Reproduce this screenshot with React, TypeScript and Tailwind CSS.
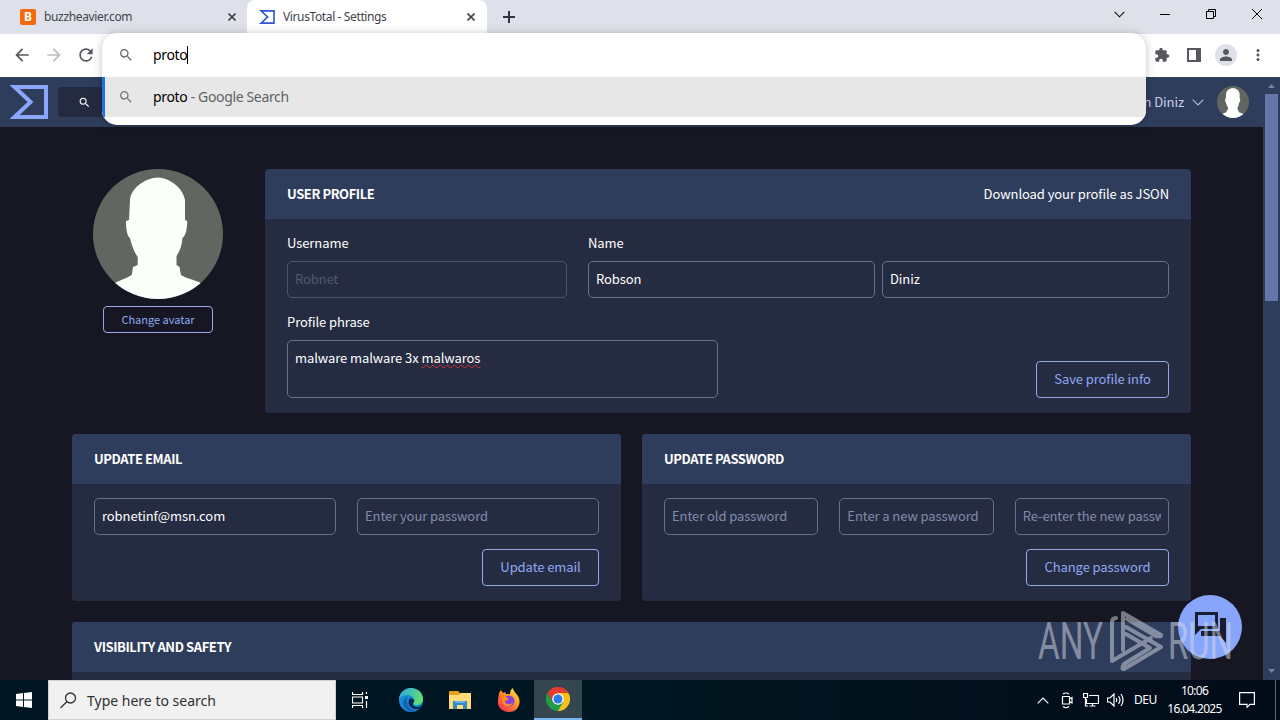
import React from "react";
import {
  MdArrowBack,
  MdArrowForward,
  MdExtension,
  MdMoreVert,
  MdPerson,
  MdRefresh,
  MdSearch,
} from "react-icons/md";
import classNames from "clsx";

type IconProps = {
  className?: string;
};

type CardProps = {
  title: string;
  action?: string;
  className?: string;
  children?: React.ReactNode;
};

type FieldProps = {
  value?: string;
  placeholder?: string;
  disabled?: boolean;
  className?: string;
};

const Avatar: React.FC<IconProps> = ({ className }) => (
  <svg viewBox="0 0 130 130" className={classNames("rounded-full", className)}>
    <rect width="130" height="130" fill="#626661" />
    <path
      fill="#fdfffc"
      d="M65 8.500C52 9 38 19 37 31L36 51L33 52C33 60 34 67 37 69C39 78 42 84 44.700 88V96L40 98L38.700 106C34 109 27 111 18 116V130H112V116C103 111 92 109 88 106L86.500 98L83.500 96V87C87 82 89 76 89.500 69C93 66 94 60 94.300 52L92 51L92 31C90 19 77 9 65 8.500Z"
    />
  </svg>
);

const VirusTotalLogo: React.FC<IconProps> = ({ className }) => (
  <svg viewBox="0 0 38 34" className={className}>
    <path
      d="M4.500 2H36V32H4.500L20.500 17Z"
      fill="none"
      stroke="currentColor"
      strokeWidth="4"
    />
  </svg>
);

const Cross: React.FC<IconProps> = ({ className }) => (
  <svg viewBox="0 0 8 8" className={className}>
    <path d="M.5 .5L7.500 7.500M7.500 .5L.5 7.500" stroke="currentColor" strokeWidth="1.600" />
  </svg>
);

const Chevron: React.FC<IconProps> = ({ className }) => (
  <svg viewBox="0 0 12 7" className={className}>
    <path d="M.7 .7L6 6L11.300 .7" fill="none" stroke="currentColor" strokeWidth="1.100" />
  </svg>
);

const TabStrip: React.FC = () => (
  <div className="flex h-[34px] bg-[#dee1e9] text-[12px] text-[#40444c]">
    <div className="flex w-[247px] items-center pl-5">
      <div className="flex h-4 w-4 items-center justify-center rounded-[2px] bg-[#f76a0b] text-[12px] font-bold text-white">
        B
      </div>
      <span className="ml-2 w-[184px] tracking-[-0.35px]">buzzheavier.com</span>
      <Cross className="h-2 w-2" />
    </div>
    <div className="flex w-[240px] items-center rounded-t-lg bg-white pl-3">
      <VirusTotalLogo className="h-[14px] w-4 text-[#3057d5]" />
      <span className="ml-2 w-[184px] tracking-[-0.38px]">VirusTotal - Settings</span>
      <Cross className="h-2 w-2" />
    </div>
    <svg viewBox="0 0 12 12" className="ml-4 mt-[11px] h-3 w-3 text-[#303440]">
      <path d="M6 0V12M0 6H12" stroke="currentColor" strokeWidth="2" />
    </svg>
    <div className="ml-auto flex items-start pr-[18px] pt-[9px] text-black">
      <Chevron className="mr-[35px] mt-0.5 h-[7px] w-[11px]" />
      <svg viewBox="0 0 10 10" className="mr-[36px] h-[10px] w-[10px]">
        <path d="M0 5.500H10" stroke="currentColor" />
      </svg>
      <svg viewBox="0 0 10 10" className="mr-9 h-[10px] w-[10px]" fill="none" stroke="currentColor">
        <path d="M.5 2.500H7.500V9.500H.5ZM2.500 2.500V.5H9.500V7.500H7.500" />
      </svg>
      <svg viewBox="0 0 10 10" className="h-[10px] w-[10px]" stroke="currentColor">
        <path d="M0 0L10 10M10 0L0 10" />
      </svg>
    </div>
  </div>
);

const Toolbar: React.FC = () => (
  <div className="flex h-[43px] items-center bg-white pb-px text-[#55585e]">
    <MdArrowBack className="ml-3 h-5 w-5" />
    <MdArrowForward className="ml-3 h-5 w-5 text-[#bbbcbf]" />
    <MdRefresh className="ml-3 h-5 w-5" />
    <MdExtension className="ml-auto h-4 w-4" />
    <svg viewBox="0 0 14 14" className="ml-[17px] h-[14px] w-[14px]">
      <path fill="currentColor" fillRule="evenodd" d="M0 0H14V14H0ZM2 2V12H9V2Z" />
    </svg>
    <div className="ml-[14px] flex h-[22px] w-[22px] items-center justify-center rounded-full bg-[#dfe1e9]">
      <MdPerson className="h-[18px] w-[18px]" />
    </div>
    <MdMoreVert className="ml-3 mr-[13px] h-[18px] w-[18px]" />
  </div>
);

const Omnibox: React.FC = () => (
  <div className="absolute left-[102px] top-[33px] z-10 flex h-[92px] w-[1044px] flex-col overflow-hidden rounded-[15px] bg-white text-[14px] shadow-[0_1px_8px_rgba(0,0,0,0.25)]">
    <div className="flex h-11 items-center pb-px pl-4">
      <MdSearch className="h-4 w-4 text-[#686b70]" />
      <span className="ml-[19px] tracking-[-0.35px] text-black">proto</span>
      <span className="h-[18px] w-px bg-black" />
    </div>
    <div className="flex h-10 items-center border-l-[3px] border-[#1a73e8] bg-[#e7e7e7] pb-px pl-[13px]">
      <MdSearch className="h-4 w-4 text-[#77797d]" />
      <span className="ml-[19px] tracking-[-0.35px] text-black">proto</span>
      <span className="whitespace-pre tracking-[-0.35px] text-[#606266]"> - Google Search</span>
    </div>
  </div>
);

const Card: React.FC<CardProps> = ({ title, action, className, children }) => (
  <section className={classNames("overflow-hidden rounded bg-[#252c42]", className)}>
    <header className="flex h-[50px] items-center justify-between bg-[#2f3d5c] px-[22px]">
      <h2 className="text-[13px] font-bold tracking-[-0.42px]">{title}</h2>
      {action && <span>{action}</span>}
    </header>
    {children}
  </section>
);

const Field: React.FC<FieldProps> = ({ value, placeholder, disabled, className }) => (
  <input
    readOnly
    value={value || ""}
    placeholder={placeholder}
    disabled={disabled}
    className={classNames(
      "h-[37px] min-w-0 rounded-[5px] border px-[7px] pb-0.5 tracking-[-0.08px] placeholder:text-[#828ba9]",
      disabled ? "border-[#4d556b] text-[#4e5a72]" : "border-[#66708f] text-white",
      className
    )}
  />
);

const Button: React.FC<{ label: string; className: string }> = ({ label, className }) => (
  <button
    className={classNames(
      "whitespace-nowrap rounded border border-[#95a9e5] text-center text-[#8ea8f4]",
      className
    )}
  >
    {label}
  </button>
);

const SettingsPage: React.FC = () => (
  <div className="flex h-[603px] bg-[#171723] font-['Noto_Sans_CJK_SC',sans-serif] text-[13px] tracking-[-0.08px] text-white">
    <main className="w-[1263px] overflow-hidden">
      <nav className="flex h-[50px] items-center bg-[#2f3d5c] pl-[10px] pr-[14px]">
        <VirusTotalLogo className="h-[34px] w-[38px] text-[#8ba6fb]" />
        <div className="ml-[10px] flex h-[30px] w-[300px] items-center rounded bg-[#242b40] pl-5">
          <MdSearch className="h-[13px] w-[13px]" />
        </div>
        <span className="ml-auto text-[#c6d0ea]">Robson Diniz</span>
        <Chevron className="ml-2 mr-[13px] h-[7px] w-3 text-[#b4c0df]" />
        <Avatar className="h-8 w-8" />
      </nav>
      <div className="ml-[72px] mt-[42px] w-[1119px]">
        <div className="flex">
          <div className="flex w-[193px] flex-col items-center pr-[21px]">
            <Avatar className="h-[130px] w-[130px]" />
            <Button label="Change avatar" className="mt-[7px] h-[27px] w-[110px] text-[11px] tracking-normal" />
          </div>
          <Card title="USER PROFILE" action="Download your profile as JSON" className="h-[244px] w-[926px]">
            <div className="flex gap-[21px] px-[22px] pt-[15px]">
              <label className="flex w-[280px] flex-col">
                <span className="mb-[9px] h-[18px] leading-[18px]">Username</span>
                <Field value="Robnet" disabled />
              </label>
              <div className="flex-1">
                <div className="mb-[9px] h-[18px] leading-[18px]">Name</div>
                <div className="flex gap-[7px]">
                  <Field value="Robson" className="flex-1" />
                  <Field value="Diniz" className="flex-1" />
                </div>
              </div>
            </div>
            <div className="flex items-end justify-between px-[22px] pt-[15px]">
              <div>
                <div className="mb-[9px] h-[18px] leading-[18px]">Profile phrase</div>
                <div className="h-[58px] w-[431px] rounded-[5px] border border-[#66708f] px-[7px] pt-[7px] leading-[19px]">
                  malware malware 3x{" "}
                  <span className="underline decoration-[#d32f43] decoration-wavy decoration-1 underline-offset-1">
                    malwaros
                  </span>
                </div>
              </div>
              <Button label="Save profile info" className="h-[37px] w-[133px] pb-0.5" />
            </div>
          </Card>
        </div>
        <div className="mt-[21px] flex gap-[21px]">
          <Card title="UPDATE EMAIL" className="h-[167px] w-[549px]">
            <div className="flex flex-col gap-[14px] px-[22px] pt-[14px]">
              <div className="flex gap-[21px]">
                <Field value="robnetinf@msn.com" className="flex-1" />
                <Field placeholder="Enter your password" className="flex-1" />
              </div>
              <Button label="Update email" className="h-[37px] w-[117px] self-end pb-0.5" />
            </div>
          </Card>
          <Card title="UPDATE PASSWORD" className="h-[167px] w-[549px]">
            <div className="flex flex-col gap-[14px] px-[22px] pt-[14px]">
              <div className="flex gap-[21px]">
                <Field placeholder="Enter old password" className="flex-1" />
                <Field placeholder="Enter a new password" className="flex-1" />
                <Field placeholder="Re-enter the new password" className="flex-1" />
              </div>
              <Button label="Change password" className="h-[37px] w-[143px] self-end pb-0.5" />
            </div>
          </Card>
        </div>
        <Card title="VISIBILITY AND SAFETY" className="mt-[21px] h-[200px]" />
      </div>
    </main>
    <aside className="flex w-[17px] flex-col items-center bg-[#2f3d5c]">
      <svg viewBox="0 0 7 4" className="mt-[7px] h-1 w-[7px]">
        <path d="M0 4L3.500 0L7 4Z" fill="#7081b0" />
      </svg>
      <div className="mt-[6px] h-[207px] w-[13px] bg-[#6576a8]" />
      <svg viewBox="0 0 7 4" className="mb-[7px] mt-auto h-1 w-[7px]">
        <path d="M0 0L3.500 4L7 0Z" fill="#7081b0" />
      </svg>
    </aside>
  </div>
);

const ChatButton: React.FC = () => (
  <div className="absolute left-[1178px] top-[595px] flex h-16 w-16 items-center justify-center rounded-full bg-[#87a5fb]">
    <svg viewBox="0 0 31 31" className="h-[31px] w-[31px]" fill="#191f31">
      <path fillRule="evenodd" d="M0 0H23V17H6L0 23ZM3 3V14H20V3Z" />
      <path d="M25 6H31V31L25 24H6V19H25Z" />
    </svg>
  </div>
);

// translucent brand mark that floats above the desktop
const Watermark: React.FC = () => (
  <svg
    viewBox="0 0 200 64"
    className="absolute left-[1037px] top-[609px] z-10 h-16 w-[200px] overflow-visible font-['Roboto',sans-serif] text-[51px] font-normal"
    fill="#d7dbe3"
    opacity="0.5"
  >
    <text x="1" y="50" textLength="65" lengthAdjust="spacingAndGlyphs">ANY</text>
    <text x="131" y="50" textLength="65" lengthAdjust="spacingAndGlyphs">RUN</text>
    <g fill="none" stroke="#d7dbe3" strokeWidth="4" strokeLinejoin="round" strokeLinecap="round">
      <path d="M79 9Q75 9 75 13V52L114 29M86 41V4L124 26Q125 28 119 27L90 10" />
      <path d="M89 18L124 38L87 60Q84 60 87 55L113 39L89 25" />
    </g>
  </svg>
);

const EdgeIcon: React.FC = () => (
  <svg viewBox="0 0 24 24" className="h-6 w-6">
    <defs>
      <linearGradient id="edge-top" x1="0" x2="1" y1="0" y2=".4">
        <stop stopColor="#26a9e8" />
        <stop offset="1" stopColor="#60dc75" />
      </linearGradient>
    </defs>
    <circle cx="12" cy="12" r="12" fill="#168bd8" />
    <path d="M0 11C1 4 6 0 12 0C19 0 24 5 24 11C24 15 21 17 17 17C14 17 14 15 15 14C17 11 13 7 9 7C5 7 2 8 0 11Z" fill="url(#edge-top)" />
    <path d="M9 8C6 12 8 22 17 22L21 20C17 24 10 25 6 20C2 15 5 10 9 8Z" fill="#1261b3" />
    <path d="M15 14C13 16 14 19 18 19C20 19 22 18 23 17L21 20C14 23 8 18 10 12C11 9 16 11 15 14Z" fill="#06294b" />
  </svg>
);

const FolderIcon: React.FC = () => (
  <svg viewBox="0 0 22 18" className="h-[18px] w-[22px]">
    <path d="M0 0H9L11 2H22V18H0Z" fill="#e6a11c" />
    <path d="M0 4H10L12 2H22V18H0Z" fill="#ffdc77" />
    <path d="M4 10H18V18H14V14H8V18H4Z" fill="#348bc7" />
    <path d="M6 10H16V12H6Z" fill="#62b5e5" />
  </svg>
);

const FirefoxIcon: React.FC = () => (
  <svg viewBox="0 0 24 24" className="h-6 w-6">
    <defs>
      <linearGradient id="fox" x1="1" x2=".2" y1="0" y2="1">
        <stop stopColor="#fff44f" />
        <stop offset=".45" stopColor="#ff9b22" />
        <stop offset="1" stopColor="#f42b58" />
      </linearGradient>
    </defs>
    <path d="M2 5L4 2L6 5L8 4L9 6L13 6C13 3 14 1 16 0C16 3 19 5 21 8C25 15 21 24 12 24C5 24 0 19 1 12C1 9 2 8 2 5Z" fill="url(#fox)" />
    <circle cx="12" cy="13" r="5.500" fill="#8740dc" />
    <path d="M4 9C8 8 9 9 12 11C10 13 8 12 8 14C9 17 14 17 16 14C15 19 9 20 6 16Z" fill="#ff8a24" />
  </svg>
);

const ChromeIcon: React.FC = () => (
  <svg viewBox="0 0 24 24" className="h-6 w-6">
    <path d="M12 12L1.600 6A12 12 0 0 1 22.400 6Z" fill="#e33b2e" />
    <path d="M12 12L12 6H22.400A12 12 0 0 1 12 24Z" fill="#fbc116" />
    <path d="M12 12L17.200 15L12 24A12 12 0 0 1 1.600 6L7 15Z" fill="#229c4b" />
    <path d="M1.600 6A12 12 0 0 1 22.400 6H12L7 9V15Z" fill="#e33b2e" />
    <circle cx="12" cy="12" r="5.800" fill="#fff" />
    <circle cx="12" cy="12" r="4.500" fill="#287de9" />
  </svg>
);

const Taskbar: React.FC = () => (
  <footer className="flex h-10 bg-gradient-to-r from-[#001721] via-[#001620] to-[#020b19] text-[12px] text-white">
    <div className="flex w-12 items-center justify-center">
      <svg viewBox="0 0 16 16" className="h-4 w-4" fill="currentColor">
        <path d="M0 2L7 1V7.500H0ZM8 1L16 0V7.500H8ZM0 8.500H7V15L0 14ZM8 8.500H16V16L8 15Z" />
      </svg>
    </div>
    <div className="flex w-72 items-center border border-[#cfcfcf] bg-[#f1f1f1] pl-[11px] text-[14px] text-[#303030]">
      <svg viewBox="0 0 17 17" className="h-[17px] w-[17px]" fill="none" stroke="currentColor" strokeWidth="1.300">
        <circle cx="10.500" cy="6" r="5" />
        <path d="M7 9.500L.5 16" />
      </svg>
      <span className="ml-[10px] tracking-[0px]">Type here to search</span>
    </div>
    <div className="flex w-12 items-center justify-center">
      <svg viewBox="0 0 16 16" className="h-4 w-4" fill="none" stroke="currentColor" strokeWidth="1.200">
        <path d="M.5 0V2.500H10.500V0M.5 5H10.500V11H.5ZM.5 16V13.500H10.500V16M14.500 0V2M14.500 9V16" />
        <path d="M13 4H16V7H13Z" fill="currentColor" stroke="none" />
      </svg>
    </div>
    <div className="ml-[3px] flex w-12 items-center justify-center"><EdgeIcon /></div>
    <div className="ml-px flex w-12 items-center justify-center"><FolderIcon /></div>
    <div className="ml-px flex w-12 items-center justify-center"><FirefoxIcon /></div>
    <div className="ml-px flex w-12 items-center justify-center border-b-2 border-[#75b7ed] bg-[#34464f]"><ChromeIcon /></div>
    <div className="ml-auto flex items-center">
      <Chevron className="h-[7px] w-3 rotate-180" />
      <svg viewBox="0 0 12 17" className="ml-3 h-[17px] w-3" fill="none" stroke="currentColor" strokeWidth="1.200">
        <path d="M1.500 4.500H8.500V12H1.500ZM8.500 7L11 5.500V11L8.500 9.500M2 2Q5 0 8 2M2 14.500Q5 17 8 14.500" />
      </svg>
      <svg viewBox="0 0 16 14" className="ml-[10px] h-[14px] w-4" fill="none" stroke="currentColor" strokeWidth="1.200">
        <path d="M6 2.500H15.500V10.500H3.500V6M9.500 10.500V13M6.500 13H12.500M.5 .5H4.500V4.500H.5ZM2.500 4.500V13H5" />
      </svg>
      <svg viewBox="0 0 17 14" className="ml-2 h-[14px] w-[17px]" fill="none" stroke="currentColor" strokeWidth="1.200">
        <path d="M.5 5H3L7 1V13L3 9H.5ZM9 5Q10.500 7 9 9M11.500 3Q14.500 7 11.500 11M14 1Q18 7 14 13" />
      </svg>
      <span className="ml-[10px] w-[33px] tracking-[-0.5px]">DEU</span>
      <div className="flex w-[55px] flex-col items-center whitespace-nowrap text-center leading-[18px] tracking-[-0.7px]">
        <span>10:06</span>
        <span>16.04.2025</span>
      </div>
      <svg viewBox="0 0 16 16" className="ml-[17px] mr-5 h-4 w-4" fill="none" stroke="currentColor" strokeWidth="1.200">
        <path d="M.6 .6H15.400V12.400H11L8 15.300V12.400H.6Z" />
      </svg>
    </div>
    <div className="mr-1 w-px bg-[#626b75]" />
  </footer>
);

const App: React.FC = () => (
  <div className="relative h-[720px] w-[1280px] overflow-hidden font-['Noto_Sans',sans-serif]">
    <TabStrip />
    <Toolbar />
    <SettingsPage />
    <Taskbar />
    <Omnibox />
    <ChatButton />
    <Watermark />
  </div>
);

export default App;
